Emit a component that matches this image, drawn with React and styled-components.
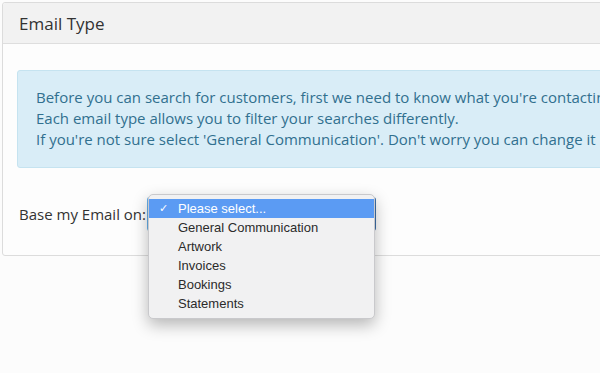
import React from "react";
import styled, { createGlobalStyle } from "styled-components";

const Global = createGlobalStyle`
  html, body { margin: 0; padding: 0; background: #fcfcfc; }
  body { font-family: "Open Sans", "Liberation Sans", sans-serif; color: #333; overflow: hidden; }
  #root { width: 600px; height: 373px; overflow: hidden; }
`;

const Page = styled.div`
  width: 600px;
  height: 373px;
  padding: 2px 0 0 2px;
  box-sizing: border-box;
  overflow: hidden;
`;

const Panel = styled.section`
  width: 720px;
  border: 1px solid #dcdcdc;
  border-radius: 3px;
  background: #fdfdfd;
  box-sizing: border-box;
`;

const PanelHeader = styled.header`
  height: 40px;
  background: #f2f2f2;
  border-bottom: 1px solid #dedede;
  display: flex;
  align-items: center;
  padding-left: 16px;
  font-size: 17px;
  color: #333;
  border-radius: 3px 3px 0 0;
`;

const PanelBody = styled.div`
  padding: 26px 0 24px 14px;
`;

const Info = styled.div`
  background: #d9edf7;
  border: 1px solid #c5e3f0;
  border-radius: 3px;
  padding: 16px 18px 17px 18px;
  color: #31708f;
  font-size: 15px;
  line-height: 21px;
  white-space: nowrap;
`;

const FormRow = styled.div`
  display: flex;
  align-items: center;
  gap: 1px;
  margin-top: 29px;
  padding-left: 2px;
`;

const Label = styled.label`
  font-size: 15px;
  color: #333;
`;

const SelectWrap = styled.div`
  position: relative;
  width: 229px;
  height: 34px;
`;

const SelectBox = styled.div`
  width: 100%;
  height: 100%;
  box-sizing: border-box;
  border: 1px solid #66afe9;
  border-right: 2px solid #3d6fa8;
  border-radius: 3px;
  background: #fff;
`;

const Menu = styled.ul`
  position: absolute;
  left: 1px;
  top: -3px;
  width: 227px;
  height: 125px;
  box-sizing: border-box;
  margin: 0;
  padding: 4px 0 0;
  list-style: none;
  background: #f1f1f2;
  border: 1px solid #c9c9cc;
  border-radius: 5px;
  box-shadow: 0 6px 16px rgba(0, 0, 0, 0.28);
  font-family: "Liberation Sans", Arial, sans-serif;
  font-size: 13px;
`;

const Item = styled.li`
  position: relative;
  height: 19px;
  line-height: 19px;
  padding-left: 29px;
  color: ${(p) => (p.$active ? "#fff" : "#2b2b2b")};
  background: ${(p) => (p.$active ? "#5b9bf3" : "transparent")};
`;

const Check = styled.span`
  position: absolute;
  left: 10px;
  top: 0;
  font-size: 11px;
  color: #fff;
`;

const options = [
  "Please select...",
  "General Communication",
  "Artwork",
  "Invoices",
  "Bookings",
  "Statements",
];

export default function App() {
  return (
    <Page>
      <Global />
      <Panel>
        <PanelHeader>Email Type</PanelHeader>
        <PanelBody>
          <Info>
            Before you can search for customers, first we need to know what you're contacting them about.
            <br />
            Each email type allows you to filter your searches differently.
            <br />
            If you're not sure select 'General Communication'. Don't worry you can change it later.
          </Info>
          <FormRow>
            <Label>Base my Email on:</Label>
            <SelectWrap>
              <SelectBox />
              <Menu>
                {options.map((o, i) => (
                  <Item key={o} $active={i === 0}>
                    {i === 0 && <Check>✓</Check>}
                    {o}
                  </Item>
                ))}
              </Menu>
            </SelectWrap>
          </FormRow>
        </PanelBody>
      </Panel>
    </Page>
  );
}
